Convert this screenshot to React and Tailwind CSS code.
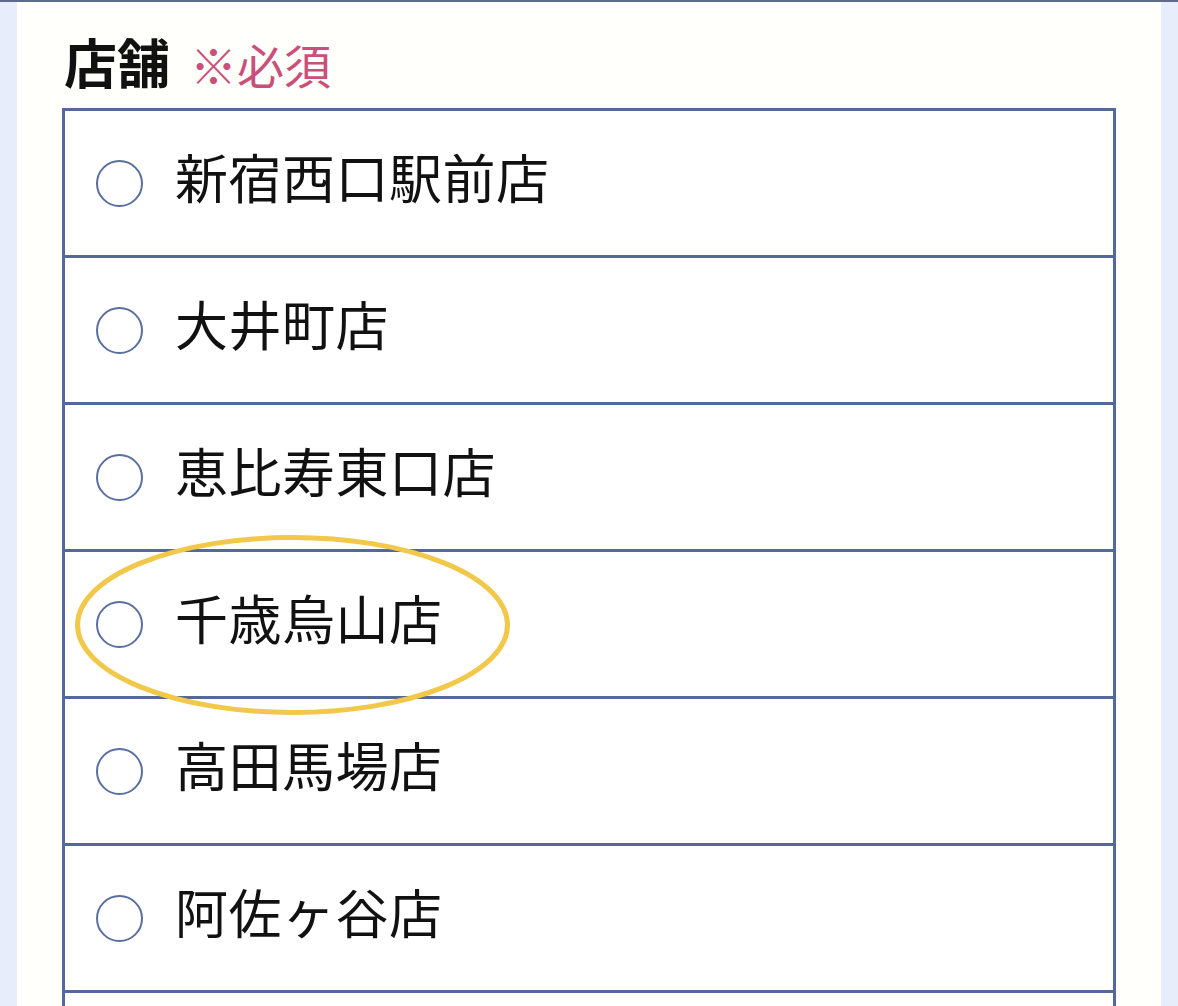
import React from "react";

const stores = [
  "新宿西口駅前店",
  "大井町店",
  "恵比寿東口店",
  "千歳烏山店",
  "高田馬場店",
  "阿佐ヶ谷店",
];

const StoreRow = ({ label }) => {
  return (
    <label className="flex h-[147px] items-center border-t-[3px] border-[#53699a] pl-[31px] first:border-t-0 first:h-[144px]">
      <span className="block h-[47px] w-[47px] shrink-0 rounded-full border-[2.5px] border-[#5a6fa0] bg-white" />
      <span className="ml-[32px] pb-[13px] text-[53px] leading-none tracking-[0.5px] text-[#111]">
        {label}
      </span>
    </label>
  );
};

export default function App() {
  return (
    <div
      className="min-h-screen border-t-2 border-[#5d6b88] bg-[#e7edfb] px-[17px]"
      style={{ fontFamily: '"Noto Sans CJK JP", "Noto Sans", sans-serif' }}
    >
      <div className="relative min-h-[1004px] bg-[#fffffb] px-[45px] pt-[29px]">
        <h2 className="flex items-baseline pl-[2px] leading-[60px]">
          <span className="text-[53px] font-bold text-[#111]">店舗</span>
          <span className="ml-[20px] text-[47px] text-[#c9507a]">※必須</span>
        </h2>

        <div className="mt-[14px] border-[3px] border-[#53699a] bg-white">
          {stores.map((s) => (
            <StoreRow key={s} label={s} />
          ))}
          <div className="h-[147px] border-t-[3px] border-[#53699a]" />
        </div>

        {/* annotation ellipse */}
        <svg
          className="pointer-events-none absolute left-[58px] top-[531px]"
          width="440"
          height="184"
          viewBox="0 0 440 184"
        >
          <ellipse
            cx="217.5"
            cy="92"
            rx="215"
            ry="87.5"
            fill="none"
            stroke="#f1c84a"
            strokeWidth="5"
          />
        </svg>
      </div>
    </div>
  );
}
